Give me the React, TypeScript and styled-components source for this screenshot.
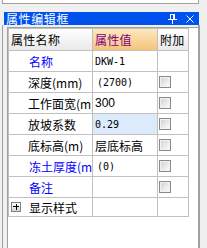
import React from 'react';
import styled, { createGlobalStyle } from 'styled-components';

const GlobalStyle = createGlobalStyle`
  html, body {
    margin: 0;
    padding: 0;
    background: #f0f0f0;
  }
  * {
    box-sizing: border-box;
  }
`;

const CJK = `"Noto Sans CJK SC", "Liberation Sans", sans-serif`;

type Row = {
  label: string;
  blue?: boolean;
  value: string;
  font?: 'mono' | 'sans' | 'cjk';
  indent?: boolean;
  check?: boolean;
  selected?: boolean;
};

const rows: Row[] = [
  { label: '名称', blue: true, value: 'DKW-1', font: 'mono' },
  { label: '深度(mm)', value: '(2700)', font: 'mono', indent: true, check: true },
  { label: '工作面宽(m)', value: '300', font: 'sans', check: true },
  { label: '放坡系数', value: '0.29', font: 'mono', check: true, selected: true },
  { label: '底标高(m)', value: '层底标高', font: 'cjk', check: true },
  { label: '冻土厚度(m)', blue: true, value: '(0)', font: 'mono', indent: true, check: true },
  { label: '备注', blue: true, value: '', check: true },
];

const PinIcon = () => (
  <svg width="9" height="10" viewBox="0 0 9 10" shapeRendering="crispEdges">
    <rect x="2.5" y="0.5" width="4" height="5" fill="none" stroke="#fff" />
    <rect x="5" y="0" width="2" height="6" fill="#fff" />
    <rect x="0" y="5" width="9" height="1" fill="#fff" />
    <rect x="4" y="6" width="1" height="4" fill="#fff" />
  </svg>
);

const CloseIcon = () => (
  <svg width="8" height="8" viewBox="0 0 8 8">
    <path d="M0.5 0.5 L7.5 7.5 M7.5 0.5 L0.5 7.5" stroke="#fff" strokeWidth="1" />
  </svg>
);

const App = () => {
  return (
    <>
      <GlobalStyle />
      <Frame>
        <TopPanel />
        <TitleBar>
          <Title>属性编辑框</Title>
          <TitleButtons>
            <PinIcon />
            <CloseIcon />
          </TitleButtons>
        </TitleBar>
        <Body>
          <Client>
            <Grid>
              <HeadCell>属性名称</HeadCell>
              <HeadCell $active>属性值</HeadCell>
              <HeadCell>附加</HeadCell>

              {rows.map((r) => (
                <React.Fragment key={r.label}>
                  <LabelCell $blue={r.blue}>{r.label}</LabelCell>
                  <ValueCell $font={r.font} $indent={r.indent} $selected={r.selected}>
                    {r.value}
                  </ValueCell>
                  <CheckCell>{r.check && <CheckBox />}</CheckCell>
                </React.Fragment>
              ))}

              <GroupCell>
                <Expander>
                  <svg width="8" height="8" viewBox="0 0 8 8" shapeRendering="crispEdges">
                    <rect x="0" y="3" width="7" height="1" fill="#000" />
                    <rect x="3" y="0" width="1" height="7" fill="#000" />
                  </svg>
                </Expander>
                显示样式
              </GroupCell>
              <ValueCell />
              <CheckCell />
            </Grid>
          </Client>
        </Body>
      </Frame>
    </>
  );
};

const Frame = styled.div`
  width: 207px;
  height: 248px;
  display: flex;
  flex-direction: column;
  overflow: hidden;
`;

const TopPanel = styled.div`
  margin: 0 8px 0 2px;
  height: 4px;
  background: #fff;
  border: 1px solid #a0a0a0;
  border-top: 0;
`;

const TitleBar = styled.div`
  margin: 8px 8px 0 4px;
  height: 13px;
  background: #0052ee;
  color: #fff;
  display: flex;
  align-items: center;
  justify-content: space-between;
  padding-left: 2px;
`;

const Title = styled.span`
  font-family: ${CJK};
  font-size: 12px;
  line-height: 13px;
  letter-spacing: 0.6px;
`;

const TitleButtons = styled.div`
  display: flex;
  align-items: center;
  gap: 9px;
  padding-right: 5px;
`;

const Body = styled.div`
  flex: 1;
  margin: 0 7px 0 2px;
  border-left: 1px solid #a0a0a0;
  border-right: 2px solid #a0a0a0;
  padding: 2px 0 0 4px;
  display: flex;
`;

const Client = styled.div`
  flex: 1;
  background: #fff;
  border-top: 1px solid #a0a0a0;
  border-left: 1px solid #a0a0a0;
  display: flex;
  align-items: flex-start;
`;

const Grid = styled.div`
  display: grid;
  grid-template-columns: 83px 64px 30px;
  grid-template-rows: 21px repeat(7, 20px) 18px;
  gap: 1px;
  padding: 1px;
  background: #c0c0c0;
`;

const Cell = styled.div`
  background: #fff;
  display: flex;
  align-items: center;
  overflow: hidden;
  white-space: nowrap;
  font-family: ${CJK};
  font-size: 12px;
  color: #000;
`;

const HeadCell = styled(Cell)<{ $active?: boolean }>`
  padding-left: 2px;
  font-size: 12px;
  letter-spacing: 0.3px;
  color: ${(p) => (p.$active ? '#800080' : '#000')};
  background: ${(p) =>
    p.$active
      ? 'linear-gradient(#fde8c0, #f4c47c)'
      : 'linear-gradient(#ffffff, #e9e9e9)'};
`;

const LabelCell = styled(Cell)<{ $blue?: boolean }>`
  padding-left: ${(p) => (p.$blue ? '20px' : '19px')};
  color: ${(p) => (p.$blue ? '#0000ff' : '#000')};
`;

const ValueCell = styled(Cell)<{ $font?: string; $indent?: boolean; $selected?: boolean }>`
  padding-left: ${(p) => (p.$indent ? '4px' : '2px')};
  background: ${(p) => (p.$selected ? '#dcebfc' : '#fff')};
  font-family: ${(p) =>
    p.$font === 'mono'
      ? '"DejaVu Sans Mono", monospace'
      : p.$font === 'sans'
      ? '"Liberation Sans", Arial, sans-serif'
      : CJK};
  font-size: ${(p) => (p.$font === 'mono' ? '10px' : '12px')};
`;

const CheckCell = styled(Cell)`
  padding-left: 1px;
`;

const CheckBox = styled.span`
  width: 12px;
  height: 12px;
  border: 1px solid #8a8a8a;
  background: linear-gradient(135deg, #cfcfcf, #ffffff);
  box-shadow: inset 0 0 0 1px #f2f2f2;
`;

const GroupCell = styled(Cell)`
  padding-left: 2px;
  gap: 8px;
`;

const Expander = styled.span`
  width: 10px;
  height: 10px;
  border: 1px solid #808080;
  background: linear-gradient(#ffffff, #d6d6d6);
  display: flex;
  align-items: center;
  justify-content: center;
  padding: 0 0 0 1px;
`;

export default App;
